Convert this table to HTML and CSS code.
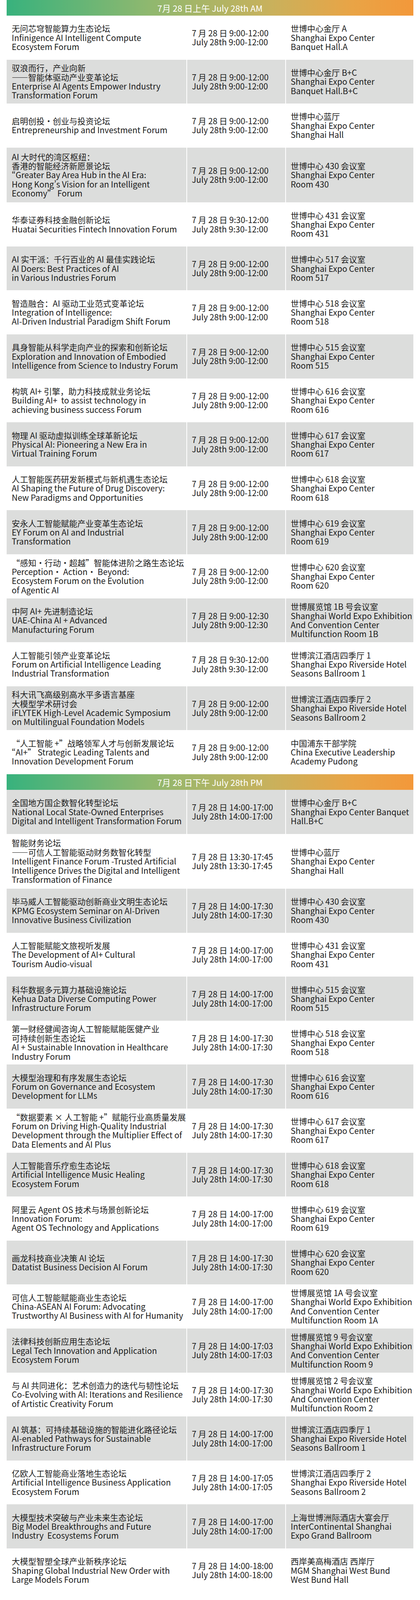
FILE: index.html
```html
<!DOCTYPE html>
<html lang="zh-CN">
<head>
<meta charset="utf-8">
<title>7月28日论坛日程</title>
<link rel="stylesheet" href="styles.css">
</head>
<body>
<div class="schedule">

  <div class="band">7月 28 日上午 July 28th AM</div>

  <div class="row row--white">
    <div class="cell"><span class="ln">无问芯穹智能算力生态论坛</span><span class="ln">Infinigence AI Intelligent Compute</span><span class="ln">Ecosystem Forum</span></div>
    <div class="cell cell--mid"><span class="ln">7 月 28 日 9:00-12:00</span><span class="ln">July 28th 9:00-12:00</span></div>
    <div class="cell cell--end"><span class="ln">世博中心金厅 A</span><span class="ln">Shanghai Expo Center</span><span class="ln">Banquet Hall.A</span></div>
  </div>
  <div class="row row--gray">
    <div class="cell"><span class="ln">驭浪而行，产业向新</span><span class="ln">——智能体驱动产业变革论坛</span><span class="ln">Enterprise AI Agents Empower Industry</span><span class="ln">Transformation Forum</span></div>
    <div class="cell cell--mid"><span class="ln">7 月 28 日 9:00-12:00</span><span class="ln">July 28th 9:00-12:00</span></div>
    <div class="cell cell--end"><span class="ln">世博中心金厅 B+C</span><span class="ln">Shanghai Expo Center</span><span class="ln">Banquet Hall.B+C</span></div>
  </div>
  <div class="row row--white">
    <div class="cell"><span class="ln">启明创投·创业与投资论坛</span><span class="ln">Entrepreneurship and Investment Forum</span></div>
    <div class="cell cell--mid"><span class="ln">7 月 28 日 9:00-12:00</span><span class="ln">July 28th 9:00-12:00</span></div>
    <div class="cell cell--end"><span class="ln">世博中心蓝厅</span><span class="ln">Shanghai Expo Center</span><span class="ln">Shanghai Hall</span></div>
  </div>
  <div class="row row--gray row--tall">
    <div class="cell"><span class="ln">AI 大时代的湾区枢纽：</span><span class="ln">香港的智能经济新愿景论坛</span><span class="ln"><span class="pw">“</span>Greater Bay Area Hub in the AI Era:</span><span class="ln">Hong Kong<span class="pw">’</span>s Vision for an Intelligent</span><span class="ln">Economy” Forum</span></div>
    <div class="cell cell--mid"><span class="ln">7 月 28 日 9:00-12:00</span><span class="ln">July 28th 9:00-12:00</span></div>
    <div class="cell cell--end"><span class="ln">世博中心 430 会议室</span><span class="ln">Shanghai Expo Center</span><span class="ln">Room 430</span></div>
  </div>
  <div class="row row--white">
    <div class="cell"><span class="ln">华泰证券科技金融创新论坛</span><span class="ln">Huatai Securities Fintech Innovation Forum</span></div>
    <div class="cell cell--mid"><span class="ln">7 月 28 日 9:30-12:00</span><span class="ln">July 28th 9:30-12:00</span></div>
    <div class="cell cell--end"><span class="ln">世博中心 431 会议室</span><span class="ln">Shanghai Expo Center</span><span class="ln">Room 431</span></div>
  </div>
  <div class="row row--gray">
    <div class="cell"><span class="ln">AI 实干派：千行百业的 AI 最佳实践论坛</span><span class="ln">AI Doers: Best Practices of AI</span><span class="ln">in Various Industries Forum</span></div>
    <div class="cell cell--mid"><span class="ln">7 月 28 日 9:00-12:00</span><span class="ln">July 28th 9:00-12:00</span></div>
    <div class="cell cell--end"><span class="ln">世博中心 517 会议室</span><span class="ln">Shanghai Expo Center</span><span class="ln">Room 517</span></div>
  </div>
  <div class="row row--white">
    <div class="cell"><span class="ln">智造融合：AI 驱动工业范式变革论坛</span><span class="ln">Integration of Intelligence:</span><span class="ln">AI-Driven Industrial Paradigm Shift Forum</span></div>
    <div class="cell cell--mid"><span class="ln">7 月 28 日 9:00-12:00</span><span class="ln">July 28th 9:00-12:00</span></div>
    <div class="cell cell--end"><span class="ln">世博中心 518 会议室</span><span class="ln">Shanghai Expo Center</span><span class="ln">Room 518</span></div>
  </div>
  <div class="row row--gray">
    <div class="cell"><span class="ln">具身智能从科学走向产业的探索和创新论坛</span><span class="ln">Exploration and Innovation of Embodied</span><span class="ln">Intelligence from Science to Industry Forum</span></div>
    <div class="cell cell--mid"><span class="ln">7 月 28 日 9:00-12:00</span><span class="ln">July 28th 9:00-12:00</span></div>
    <div class="cell cell--end"><span class="ln">世博中心 515 会议室</span><span class="ln">Shanghai Expo Center</span><span class="ln">Room 515</span></div>
  </div>
  <div class="row row--white">
    <div class="cell"><span class="ln">构筑 AI+ 引擎，助力科技成就业务论坛</span><span class="ln">Building AI+ &nbsp;to assist technology in</span><span class="ln">achieving business success Forum</span></div>
    <div class="cell cell--mid"><span class="ln">7 月 28 日 9:00-12:00</span><span class="ln">July 28th 9:00-12:00</span></div>
    <div class="cell cell--end"><span class="ln">世博中心 616 会议室</span><span class="ln">Shanghai Expo Center</span><span class="ln">Room 616</span></div>
  </div>
  <div class="row row--gray">
    <div class="cell"><span class="ln">物理 AI 驱动虚拟训练全球革新论坛</span><span class="ln">Physical AI: Pioneering a New Era in</span><span class="ln">Virtual Training Forum</span></div>
    <div class="cell cell--mid"><span class="ln">7 月 28 日 9:00-12:00</span><span class="ln">July 28th 9:00-12:00</span></div>
    <div class="cell cell--end"><span class="ln">世博中心 617 会议室</span><span class="ln">Shanghai Expo Center</span><span class="ln">Room 617</span></div>
  </div>
  <div class="row row--white">
    <div class="cell"><span class="ln">人工智能医药研发新模式与新机遇生态论坛</span><span class="ln">AI Shaping the Future of Drug Discovery:</span><span class="ln">New Paradigms and Opportunities</span></div>
    <div class="cell cell--mid"><span class="ln">7 月 28 日 9:00-12:00</span><span class="ln">July 28th 9:00-12:00</span></div>
    <div class="cell cell--end"><span class="ln">世博中心 618 会议室</span><span class="ln">Shanghai Expo Center</span><span class="ln">Room 618</span></div>
  </div>
  <div class="row row--gray">
    <div class="cell"><span class="ln">安永人工智能赋能产业变革生态论坛</span><span class="ln">EY Forum on AI and Industrial</span><span class="ln">Transformation</span></div>
    <div class="cell cell--mid"><span class="ln">7 月 28 日 9:00-12:00</span><span class="ln">July 28th 9:00-12:00</span></div>
    <div class="cell cell--end"><span class="ln">世博中心 619 会议室</span><span class="ln">Shanghai Expo Center</span><span class="ln">Room 619</span></div>
  </div>
  <div class="row row--white">
    <div class="cell"><span class="ln">“感知·行动·超越”智能体进阶之路生态论坛</span><span class="ln">Perception<span class="pw">·</span> Action<span class="pw">·</span> Beyond:</span><span class="ln">Ecosystem Forum on the Evolution</span><span class="ln">of Agentic AI</span></div>
    <div class="cell cell--mid"><span class="ln">7 月 28 日 9:00-12:00</span><span class="ln">July 28th 9:00-12:00</span></div>
    <div class="cell cell--end"><span class="ln">世博中心 620 会议室</span><span class="ln">Shanghai Expo Center</span><span class="ln">Room 620</span></div>
  </div>
  <div class="row row--gray">
    <div class="cell"><span class="ln">中阿 AI+ 先进制造论坛</span><span class="ln">UAE-China AI + Advanced</span><span class="ln">Manufacturing Forum</span></div>
    <div class="cell cell--mid"><span class="ln">7 月 28 日 9:00-12:30</span><span class="ln">July 28th 9:00-12:30</span></div>
    <div class="cell cell--end"><span class="ln">世博展览馆 1B 号会议室</span><span class="ln">Shanghai World Expo Exhibition</span><span class="ln">And Convention Center</span><span class="ln">Multifunction Room 1B</span></div>
  </div>
  <div class="row row--white">
    <div class="cell"><span class="ln">人工智能引领产业变革论坛</span><span class="ln">Forum on Artificial Intelligence Leading</span><span class="ln">Industrial Transformation</span></div>
    <div class="cell cell--mid"><span class="ln">7 月 28 日 9:30-12:00</span><span class="ln">July 28th 9:30-12:00</span></div>
    <div class="cell cell--end"><span class="ln">世博滨江酒店四季厅 1</span><span class="ln">Shanghai Expo Riverside Hotel</span><span class="ln">Seasons Ballroom 1</span></div>
  </div>
  <div class="row row--gray">
    <div class="cell"><span class="ln">科大讯飞高级别高水平多语言基座</span><span class="ln">大模型学术研讨会</span><span class="ln">iFLYTEK High-Level Academic Symposium</span><span class="ln">on Multilingual Foundation Models</span></div>
    <div class="cell cell--mid"><span class="ln">7 月 28 日 9:00-12:00</span><span class="ln">July 28th 9:00-12:00</span></div>
    <div class="cell cell--end"><span class="ln">世博滨江酒店四季厅 2</span><span class="ln">Shanghai Expo Riverside Hotel</span><span class="ln">Seasons Ballroom 2</span></div>
  </div>
  <div class="row row--white">
    <div class="cell"><span class="ln">“人工智能 +”战略领军人才与创新发展论坛</span><span class="ln"><span class="pw">“</span>AI+” Strategic Leading Talents and</span><span class="ln">Innovation Development Forum</span></div>
    <div class="cell cell--mid"><span class="ln">7 月 28 日 9:00-12:00</span><span class="ln">July 28th 9:00-12:00</span></div>
    <div class="cell cell--end"><span class="ln">中国浦东干部学院</span><span class="ln">China Executive Leadership</span><span class="ln">Academy Pudong</span></div>
  </div>

  <div class="band">7月 28 日下午 July 28th PM</div>

  <div class="row row--gray">
    <div class="cell"><span class="ln">全国地方国企数智化转型论坛</span><span class="ln">National Local State-Owned Enterprises</span><span class="ln">Digital and Intelligent Transformation Forum</span></div>
    <div class="cell cell--mid"><span class="ln">7 月 28 日 14:00-17:00</span><span class="ln">July 28th 14:00-17:00</span></div>
    <div class="cell cell--end"><span class="ln">世博中心金厅 B+C</span><span class="ln">Shanghai Expo Center Banquet</span><span class="ln">Hall.B+C</span></div>
  </div>
  <div class="row row--white row--tall">
    <div class="cell"><span class="ln">智能财务论坛</span><span class="ln">——可信人工智能驱动财务数智化转型</span><span class="ln">Intelligent Finance Forum -Trusted Artificial</span><span class="ln">Intelligence Drives the Digital and Intelligent</span><span class="ln">Transformation of Finance</span></div>
    <div class="cell cell--mid"><span class="ln">7 月 28 日 13:30-17:45</span><span class="ln">July 28th 13:30-17:45</span></div>
    <div class="cell cell--end"><span class="ln">世博中心蓝厅</span><span class="ln">Shanghai Expo Center</span><span class="ln">Shanghai Hall</span></div>
  </div>
  <div class="row row--gray">
    <div class="cell"><span class="ln">毕马威人工智能驱动创新商业文明生态论坛</span><span class="ln">KPMG Ecosystem Seminar on AI-Driven</span><span class="ln">Innovative Business Civilization</span></div>
    <div class="cell cell--mid"><span class="ln">7 月 28 日 14:00-17:30</span><span class="ln">July 28th 14:00-17:30</span></div>
    <div class="cell cell--end"><span class="ln">世博中心 430 会议室</span><span class="ln">Shanghai Expo Center</span><span class="ln">Room 430</span></div>
  </div>
  <div class="row row--white">
    <div class="cell"><span class="ln">人工智能赋能文旅视听发展</span><span class="ln">The Development of AI+ Cultural</span><span class="ln">Tourism Audio-visual</span></div>
    <div class="cell cell--mid"><span class="ln">7 月 28 日 14:00-17:00</span><span class="ln">July 28th 14:00-17:00</span></div>
    <div class="cell cell--end"><span class="ln">世博中心 431 会议室</span><span class="ln">Shanghai Expo Center</span><span class="ln">Room 431</span></div>
  </div>
  <div class="row row--gray">
    <div class="cell"><span class="ln">科华数据多元算力基础设施论坛</span><span class="ln">Kehua Data Diverse Computing Power</span><span class="ln">Infrastructure Forum</span></div>
    <div class="cell cell--mid"><span class="ln">7 月 28 日 14:00-17:00</span><span class="ln">July 28th 14:00-17:00</span></div>
    <div class="cell cell--end"><span class="ln">世博中心 515 会议室</span><span class="ln">Shanghai Expo Center</span><span class="ln">Room 515</span></div>
  </div>
  <div class="row row--white">
    <div class="cell"><span class="ln">第一财经健闻咨询人工智能赋能医健产业</span><span class="ln">可持续创新生态论坛</span><span class="ln">AI + Sustainable Innovation in Healthcare</span><span class="ln">Industry Forum</span></div>
    <div class="cell cell--mid"><span class="ln">7 月 28 日 14:00-17:30</span><span class="ln">July 28th 14:00-17:30</span></div>
    <div class="cell cell--end"><span class="ln">世博中心 518 会议室</span><span class="ln">Shanghai Expo Center</span><span class="ln">Room 518</span></div>
  </div>
  <div class="row row--gray">
    <div class="cell"><span class="ln">大模型治理和有序发展生态论坛</span><span class="ln">Forum on Governance and Ecosystem</span><span class="ln">Development for LLMs</span></div>
    <div class="cell cell--mid"><span class="ln">7 月 28 日 14:00-17:30</span><span class="ln">July 28th 14:00-17:30</span></div>
    <div class="cell cell--end"><span class="ln">世博中心 616 会议室</span><span class="ln">Shanghai Expo Center</span><span class="ln">Room 616</span></div>
  </div>
  <div class="row row--white">
    <div class="cell"><span class="ln">“数据要素 × 人工智能 +”赋能行业高质量发展</span><span class="ln">Forum on Driving High-Quality Industrial</span><span class="ln">Development through the Multiplier Effect of</span><span class="ln">Data Elements and AI Plus</span></div>
    <div class="cell cell--mid"><span class="ln">7 月 28 日 14:00-17:30</span><span class="ln">July 28th 14:00-17:30</span></div>
    <div class="cell cell--end"><span class="ln">世博中心 617 会议室</span><span class="ln">Shanghai Expo Center</span><span class="ln">Room 617</span></div>
  </div>
  <div class="row row--gray">
    <div class="cell"><span class="ln">人工智能音乐疗愈生态论坛</span><span class="ln">Artificial Intelligence Music Healing</span><span class="ln">Ecosystem Forum</span></div>
    <div class="cell cell--mid"><span class="ln">7 月 28 日 14:00-17:30</span><span class="ln">July 28th 14:00-17:30</span></div>
    <div class="cell cell--end"><span class="ln">世博中心 618 会议室</span><span class="ln">Shanghai Expo Center</span><span class="ln">Room 618</span></div>
  </div>
  <div class="row row--white">
    <div class="cell"><span class="ln">阿里云 Agent OS 技术与场景创新论坛</span><span class="ln">Innovation Forum:</span><span class="ln">Agent OS Technology and Applications</span></div>
    <div class="cell cell--mid"><span class="ln">7 月 28 日 14:00-17:00</span><span class="ln">July 28th 14:00-17:00</span></div>
    <div class="cell cell--end"><span class="ln">世博中心 619 会议室</span><span class="ln">Shanghai Expo Center</span><span class="ln">Room 619</span></div>
  </div>
  <div class="row row--gray">
    <div class="cell"><span class="ln">画龙科技商业决策 AI 论坛</span><span class="ln">Datatist Business Decision AI Forum</span></div>
    <div class="cell cell--mid"><span class="ln">7 月 28 日 14:00-17:30</span><span class="ln">July 28th 14:00-17:30</span></div>
    <div class="cell cell--end"><span class="ln">世博中心 620 会议室</span><span class="ln">Shanghai Expo Center</span><span class="ln">Room 620</span></div>
  </div>
  <div class="row row--white">
    <div class="cell"><span class="ln">可信人工智能赋能商业生态论坛</span><span class="ln">China-ASEAN AI Forum: Advocating</span><span class="ln">Trustworthy AI Business with AI for Humanity</span></div>
    <div class="cell cell--mid"><span class="ln">7 月 28 日 14:00-17:00</span><span class="ln">July 28th 14:00-17:00</span></div>
    <div class="cell cell--end"><span class="ln">世博展览馆 1A 号会议室</span><span class="ln">Shanghai World Expo Exhibition</span><span class="ln">And Convention Center</span><span class="ln">Multifunction Room 1A</span></div>
  </div>
  <div class="row row--gray">
    <div class="cell"><span class="ln">法律科技创新应用生态论坛</span><span class="ln">Legal Tech Innovation and Application</span><span class="ln">Ecosystem Forum</span></div>
    <div class="cell cell--mid"><span class="ln">7 月 28 日 14:00-17:03</span><span class="ln">July 28th 14:00-17:03</span></div>
    <div class="cell cell--end"><span class="ln">世博展览馆 9 号会议室</span><span class="ln">Shanghai World Expo Exhibition</span><span class="ln">And Convention Center</span><span class="ln">Multifunction Room 9</span></div>
  </div>
  <div class="row row--white">
    <div class="cell"><span class="ln">与 AI 共同进化：艺术创造力的迭代与韧性论坛</span><span class="ln">Co-Evolving with AI: Iterations and Resilience</span><span class="ln">of Artistic Creativity Forum</span></div>
    <div class="cell cell--mid"><span class="ln">7 月 28 日 14:00-17:30</span><span class="ln">July 28th 14:00-17:30</span></div>
    <div class="cell cell--end"><span class="ln">世博展览馆 2 号会议室</span><span class="ln">Shanghai World Expo Exhibition</span><span class="ln">And Convention Center</span><span class="ln">Multifunction Room 2</span></div>
  </div>
  <div class="row row--gray">
    <div class="cell"><span class="ln">AI 筑基：可持续基础设施的智能进化路径论坛</span><span class="ln">AI-enabled Pathways for Sustainable</span><span class="ln">Infrastructure Forum</span></div>
    <div class="cell cell--mid"><span class="ln">7 月 28 日 14:00-17:00</span><span class="ln">July 28th 14:00-17:00</span></div>
    <div class="cell cell--end"><span class="ln">世博滨江酒店四季厅 1</span><span class="ln">Shanghai Expo Riverside Hotel</span><span class="ln">Seasons Ballroom 1</span></div>
  </div>
  <div class="row row--white">
    <div class="cell"><span class="ln">亿欧人工智能商业落地生态论坛</span><span class="ln">Artificial Intelligence Business Application</span><span class="ln">Ecosystem Forum</span></div>
    <div class="cell cell--mid"><span class="ln">7 月 28 日 14:00-17:05</span><span class="ln">July 28th 14:00-17:05</span></div>
    <div class="cell cell--end"><span class="ln">世博滨江酒店四季厅 2</span><span class="ln">Shanghai Expo Riverside Hotel</span><span class="ln">Seasons Ballroom 2</span></div>
  </div>
  <div class="row row--gray">
    <div class="cell"><span class="ln">大模型技术突破与产业未来生态论坛</span><span class="ln">Big Model Breakthroughs and Future</span><span class="ln">Industry &nbsp;Ecosystems Forum</span></div>
    <div class="cell cell--mid"><span class="ln">7 月 28 日 14:00-17:00</span><span class="ln">July 28th 14:00-17:00</span></div>
    <div class="cell cell--end"><span class="ln">上海世博洲际酒店大宴会厅</span><span class="ln">InterContinental Shanghai</span><span class="ln">Expo Grand Ballroom</span></div>
  </div>
  <div class="row row--white">
    <div class="cell"><span class="ln">大模型智塑全球产业新秩序论坛</span><span class="ln">Shaping Global Industrial New Order with</span><span class="ln">Large Models Forum</span></div>
    <div class="cell cell--mid"><span class="ln">7 月 28 日 14:00-18:00</span><span class="ln">July 28th 14:00-18:00</span></div>
    <div class="cell cell--end"><span class="ln">西岸美高梅酒店 西岸厅</span><span class="ln">MGM Shanghai West Bund</span><span class="ln">West Bund Hall</span></div>
  </div>

</div>
</body>
</html>
```

FILE: styles.css
```css
html, body {
  margin: 0;
  padding: 0;
  background: #ffffff;
}

body {
  font-family: "Noto Sans CJK SC", "Noto Sans", "Liberation Sans", sans-serif;
  color: #1b1b1b;
  font-size: 21px;
  line-height: 23.35px;
  padding: 0 17px 19px;
}

.schedule {
  width: 1041px;
}

.band {
  height: 40px;
  line-height: 40px;
  overflow: hidden;
  text-align: center;
  color: #ffffff;
  font-size: 22px;
  background: linear-gradient(90deg, #38b27d 0%, #8fb86f 35%, #c9b15c 65%, #e9a446 85%, #f3983a 100%);
}

.row {
  display: grid;
  grid-template-columns: 460px 253px 328px;
  height: 112.6px;
}

.row--tall {
  height: 140.5px;
}

.row--white {
  background: #ffffff;
}

.row--gray {
  background: #dcdddc;
}

.cell {
  display: flex;
  flex-direction: column;
  justify-content: center;
  padding: 0 12px 0 13px;
  box-sizing: border-box;
  min-width: 0;
}

.cell--mid,
.cell--end {
  border-left: 2px solid #ffffff;
  padding-left: 12px;
}

.ln {
  display: block;
  height: 23.35px;
  line-height: 23.35px;
  white-space: nowrap;
}

.pw {
  font-feature-settings: "pwid";
}
```
